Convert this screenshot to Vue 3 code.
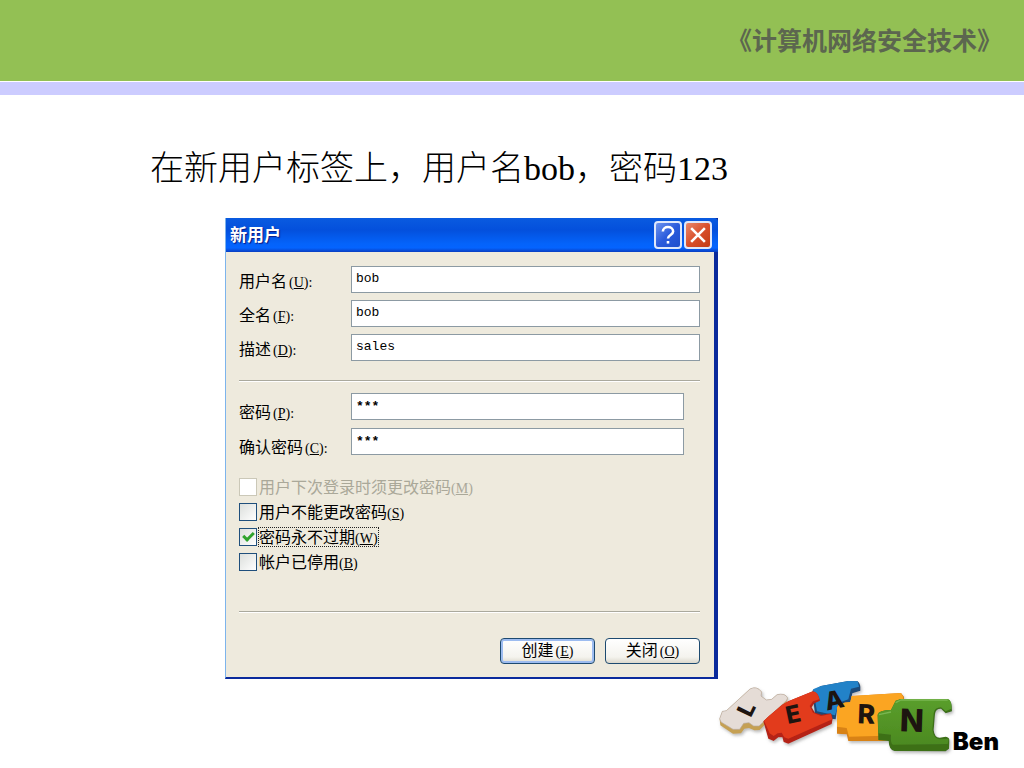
<template>
  <div class="slide">
    <header class="slide-header">《计算机网络安全技术》</header>
    <div class="slide-band"></div>

    <main class="slide-body">
      <h1 class="slide-title">在新用户标签上，用户名bob，密码123</h1>

      <!-- New user dialog -->
      <form class="dialog" @submit.prevent="createUser">
        <div class="title-bar">
          <span class="title-text">新用户</span>
          <button type="button" class="caption-btn help" aria-label="帮助">
            <svg viewBox="0 0 28 28" fill="none" stroke="#fff">
              <path d="M8 10C8 3 20 3 20 10c0 4-6 4-6 8" stroke-width="3" />
              <path d="M14 21v3" stroke-width="3" />
            </svg>
          </button>
          <button type="button" class="caption-btn close" aria-label="关闭">
            <svg viewBox="0 0 28 28" fill="none" stroke="#fff" stroke-width="3">
              <path d="M6 6l16 16M22 6L6 22" />
            </svg>
          </button>
        </div>

        <div class="dialog-body">
          <div class="fields">
            <div v-for="field in userFields" :key="field.id" class="field">
              <label :for="field.id">{{ field.label }}<span class="key">(<u>{{ field.key }}</u>):</span></label>
              <input :id="field.id" v-model="field.value" type="text" />
            </div>
          </div>

          <hr />

          <div class="fields passwords">
            <div v-for="field in passwordFields" :key="field.id" class="field">
              <label :for="field.id">{{ field.label }}<span class="key">(<u>{{ field.key }}</u>):</span></label>
              <input :id="field.id" v-model="field.value" type="text" autocomplete="off" />
            </div>
          </div>

          <div class="options">
            <div v-for="option in options" :key="option.id" class="option" :class="{ disabled: option.disabled }">
              <input :id="option.id" v-model="option.checked" type="checkbox" :disabled="option.disabled" />
              <label :for="option.id" :class="{ focused: option.focused }">{{ option.label }}<span class="key">(<u>{{ option.key }}</u>)</span></label>
            </div>
          </div>

          <hr />

          <div class="actions">
            <button type="submit" class="btn primary">创建<span class="key">(<u>E</u>)</span></button>
            <button type="button" class="btn">关闭<span class="key">(<u>O</u>)</span></button>
          </div>
        </div>
      </form>
    </main>

    <footer class="slide-footer">
      <svg class="logo" viewBox="33 27 720 234" role="img" aria-label="LEARN">
        <defs>
          <filter id="shade" x="-10%" y="-10%" width="120%" height="130%">
            <feDropShadow dx="4" dy="6" stdDeviation="4" flood-color="#777" flood-opacity="0.5" />
          </filter>
          <linearGradient id="green" x1="0" y1="0" x2="0" y2="1">
            <stop offset="0" stop-color="#5a9e2c" />
            <stop offset="1" stop-color="#4c8a20" />
          </linearGradient>
        </defs>
        <g filter="url(#shade)" stroke-linejoin="round">
          <!-- A -->
          <path d="M322 62L348 48L430 33L458 34Q468 42 466 62L442 70L436 98L408 106L396 120L392 148L360 144L330 134Z" fill="#1c4a78" />
          <path d="M324 58L348 48L430 33L458 34L462 50L438 56L430 88L402 98L390 136L336 124Z" fill="#2382c8" />
          <!-- L -->
          <path d="M44 146L52 124L64 122L135 57Q155 46 170 66L168 78L184 90L200 88L216 74Q240 68 248 84L244 98L164 180L148 181L132 174L118 176L108 190L84 191L46 166Z" fill="#c5a052" />
          <path d="M44 146L52 124L64 122L135 57Q155 46 170 66L168 78L184 90L200 88L216 74Q240 68 248 84L244 92L162 168L146 168L132 158L116 160L104 178L84 178L48 156Z" fill="#e5dcd6" stroke="#b9aca5" stroke-width="2" />
          <!-- E -->
          <path d="M175 154L192 138L232 104L250 94L320 65Q338 62 345 92L328 100L320 112L330 128L350 134L378 130L383 146L380 162L250 221L236 216L232 202L220 202L206 213L190 206Z" fill="#b52412" />
          <path d="M177 152L192 138L232 104L250 94L320 65Q338 62 343 88L324 94L314 108L324 128L348 138L378 132L382 148L250 206L238 202L230 188L218 190L206 198L194 190Z" fill="#e23a1f" />
          <!-- R -->
          <path d="M396 112Q402 98 436 96L440 78L588 69L597 80L597 208L534 213L430 213L425 193L396 191Z" fill="#d88212" />
          <path d="M396 112Q402 98 436 96L440 78L588 69L594 80L590 196L432 200L425 174L396 170Z" fill="#fba524" />
          <!-- N -->
          <path d="M518 134Q522 120 558 120L572 92L588 87L728 87Q741 90 741 124L722 130L708 116Q692 116 690 132L686 180Q688 203 704 203L722 200Q734 202 733 212L732 236L722 244L568 243Q552 240 551 213L520 210Z" fill="#3d6f19" />
          <path d="M518 134Q522 120 558 120L572 92L588 87L728 87Q741 90 739 116L722 124L708 112Q688 112 686 130L682 180Q686 207 704 208L731 206L728 222L564 224Q556 220 558 194L520 190Z" fill="url(#green)" />
          <path d="M572 98L588 90L728 90M522 134L558 126" fill="none" stroke="#79b650" stroke-width="4" />
        </g>
        <g class="letters">
          <text font-size="68" transform="translate(126 118) rotate(-64)" y="22">L</text>
          <text font-size="72" transform="translate(264 132) rotate(-12)" y="26">E</text>
          <text font-size="74" transform="translate(388 90) rotate(-12)" y="26">A</text>
          <text font-size="80" transform="translate(484 132) rotate(2)" y="29">R</text>
          <text font-size="94" transform="translate(621 151) rotate(2)" y="34">N</text>
        </g>
      </svg>
      <span class="author">Ben</span>
    </footer>
  </div>
</template>

<script setup>
import { ref } from 'vue'

// Account fields
const userFields = ref([
  { id: 'username', label: '用户名', key: 'U', value: 'bob' },
  { id: 'fullname', label: '全名', key: 'F', value: 'bob' },
  { id: 'description', label: '描述', key: 'D', value: 'sales' },
])

// Password fields
const passwordFields = ref([
  { id: 'password', label: '密码', key: 'P', value: '***' },
  { id: 'confirm', label: '确认密码', key: 'C', value: '***' },
])

// Account options
const options = ref([
  { id: 'mustChange', label: '用户下次登录时须更改密码', key: 'M', checked: false, disabled: true },
  { id: 'cannotChange', label: '用户不能更改密码', key: 'S', checked: false },
  { id: 'neverExpires', label: '密码永不过期', key: 'W', checked: true, focused: true },
  { id: 'accountDisabled', label: '帐户已停用', key: 'B', checked: false },
])

function createUser() {
  console.log('Create user:', userFields.value[0].value)
}
</script>

<style>
body {
  background: #fff;
}
</style>

<style scoped>
.slide {
  display: flex;
  flex-direction: column;
  min-height: 100vh;
  box-sizing: border-box;
  color: #000;
  font-family: "Liberation Serif", "Noto Sans CJK SC", serif;
}

.slide-header {
  padding: 22px 22px 19px;
  background: #93c054;
  color: #5c664f;
  font-size: 25px;
  font-weight: bold;
  line-height: 40px;
  text-align: right;
}

.slide-band {
  height: 13px;
  margin-top: 1px;
  background: #ccccff;
}

.slide-body {
  padding: 50px 24px 0 150px;
}

.slide-title {
  margin: 0;
  font-size: 34px;
  font-weight: 300;
  line-height: 48px;
}

.dialog {
  max-width: 493px;
  box-sizing: border-box;
  margin: 25px 0 0 75px;
  border: solid #0a2a9c;
  border-width: 0 4px 2px 1px;
  border-left-color: #7db4ec;
  background: #eeeadd;
  font-family: "Noto Sans CJK SC", sans-serif;
  font-size: 16px;
}

.title-bar {
  display: flex;
  align-items: center;
  gap: 2px;
  height: 34px;
  box-sizing: border-box;
  margin-right: -4px;
  padding: 0 6px 0 4px;
  border-radius: 0 4px 0 0;
  background: linear-gradient(#0a5be0, #0450dc 35%, #0463fa 75%, #0464ff 88%, #0a3ec0);
}

.title-text {
  flex: 1;
  padding-bottom: 3px;
  color: #fff;
  font-size: 17px;
  font-weight: bold;
  line-height: 24px;
  text-shadow: 1px 1px 1px #0a1883;
}

.caption-btn {
  width: 28px;
  height: 28px;
  box-sizing: border-box;
  padding: 0;
  border: 2px solid #dfe8fb;
  border-radius: 4px;
}

.caption-btn svg {
  display: block;
  width: 100%;
  height: 100%;
}

.caption-btn.help {
  background: linear-gradient(135deg, #6d94ef, #2a5bdc 50%, #2050cc);
}

.caption-btn.close {
  background: linear-gradient(135deg, #e9886c, #d9502c 50%, #c33c16);
}

.dialog-body {
  padding: 14px 14px 13px 13px;
}

.fields {
  display: flex;
  flex-direction: column;
  gap: 7px;
}

.field {
  display: flex;
  height: 27px;
}

.field label {
  width: 112px;
  padding-top: 2px;
  line-height: 24px;
}

.field input {
  flex: 1;
  min-width: 0;
  box-sizing: border-box;
  padding: 0 4px 2px;
  border: 1px solid #8c9aa3;
  border-radius: 0;
  background: #fff;
  color: #000;
  font-family: "Liberation Mono", monospace;
  font-size: 13px;
  outline: none;
}

.passwords {
  gap: 8px;
  padding-right: 16px;
}

.passwords label {
  padding-top: 6px;
}

.passwords input {
  padding-bottom: 0;
  font-weight: bold;
}

.key {
  margin-left: 2px;
  font-family: "Liberation Serif", serif;
  font-size: 14px;
  line-height: 16px;
}

hr {
  height: 1px;
  margin: 19px 0 11px;
  border: 0;
  border-bottom: 1px solid #fff;
  background: #aaa99d;
}

.options {
  display: flex;
  flex-direction: column;
  gap: 5px;
  margin: 22px 0 39px;
}

.option {
  display: flex;
  align-items: center;
  gap: 1px;
  height: 20px;
}

.option input {
  appearance: none;
  display: grid;
  place-items: center;
  width: 18px;
  height: 18px;
  box-sizing: border-box;
  margin: 0;
  border: 1px solid #1f4f7c;
  background: linear-gradient(135deg, #dcdfdc, #fff);
}

.option input:checked::after {
  content: "";
  width: 11px;
  height: 7px;
  box-sizing: border-box;
  margin-bottom: 3px;
  border: solid #2fa32d;
  border-width: 0 0 3px 3px;
  transform: rotate(-45deg);
}

.option label {
  height: 20px;
  box-sizing: border-box;
  border: 1px dotted transparent;
  line-height: 17px;
}

.option label.focused {
  border-color: #222;
}

.option .key {
  margin-left: 0;
}

.option.disabled {
  color: #aaa899;
}

.option.disabled input {
  border-color: #cbc8b8;
  background: #fff;
}

.actions {
  display: flex;
  justify-content: flex-end;
  gap: 10px;
  margin-top: 25px;
}

.btn {
  width: 95px;
  height: 26px;
  box-sizing: border-box;
  padding: 0 0 3px;
  border: 1px solid #1d4a70;
  border-radius: 4px;
  background: linear-gradient(#fff, #f4f3ee 75%, #dcd8cc);
  color: #000;
  font-family: inherit;
  font-size: 16px;
  line-height: 20px;
}

.btn.primary {
  box-shadow: inset 0 0 0 2px #9dbcf0;
}

.slide-footer {
  display: flex;
  justify-content: flex-end;
  align-items: flex-end;
  padding: 0 25px 10px;
}

.logo {
  width: 240px;
  height: 78px;
}

.letters {
  fill: #1d1410;
  font-family: Inter, sans-serif;
  font-weight: 800;
  text-anchor: middle;
}

.author {
  margin-left: -3px;
  font-family: Inter, sans-serif;
  font-size: 24px;
  font-weight: 900;
  line-height: 30px;
}
</style>
